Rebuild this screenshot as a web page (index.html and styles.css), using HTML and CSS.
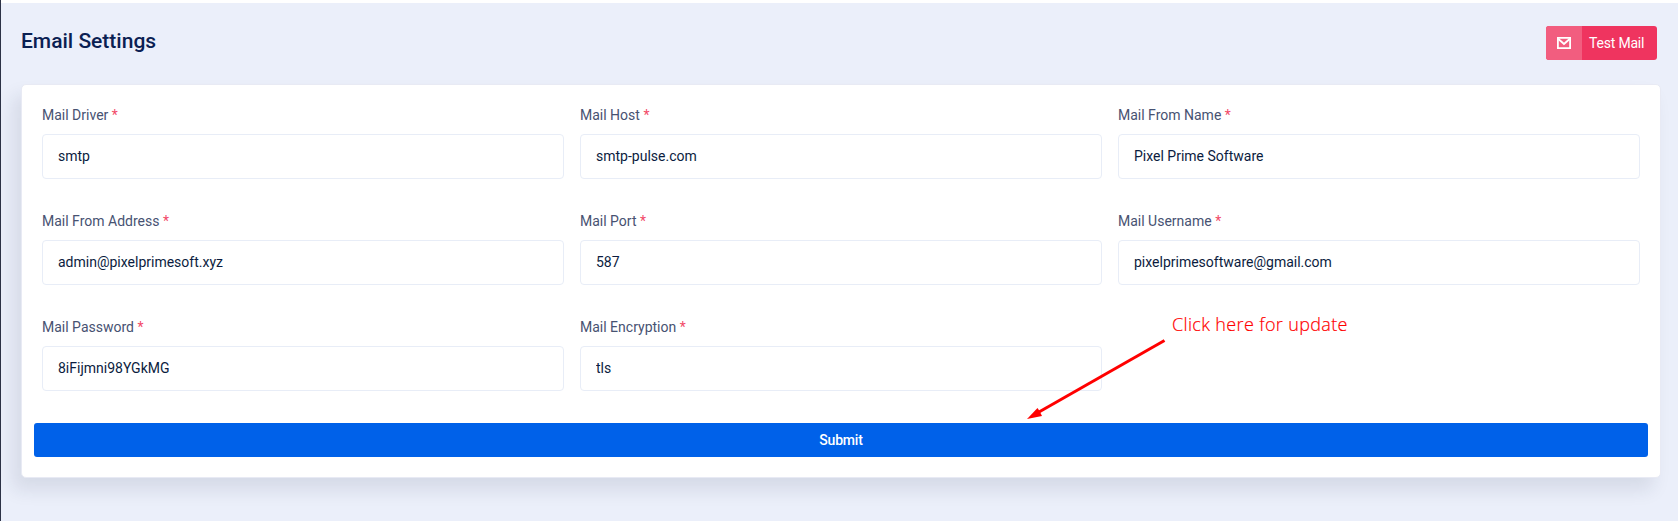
FILE: index.html
```html
<!DOCTYPE html>
<html lang="en">
<head>
<meta charset="utf-8">
<title>Email Settings</title>
<link rel="stylesheet" href="styles.css">
</head>
<body>
<main class="page">
  <header class="page-header">
    <h1 class="title">Email Settings</h1>
    <button class="test-mail" type="button">
      <span class="test-mail-icon">
        <svg width="14" height="12" viewBox="0 0 14 12" fill="none" stroke="#fff" stroke-width="1.8"><path d="M.9.9h12.2v10.2H.9z"/><path d="M1.4 2 7 7l5.6-5"/></svg>
      </span>
      <span class="test-mail-label">Test Mail</span>
    </button>
  </header>
  <form class="card">
    <div class="fields">
      <label class="field"><span class="label">Mail Driver <i class="req">*</i></span><input class="input" type="text" value="smtp"></label>
      <label class="field"><span class="label">Mail Host <i class="req">*</i></span><input class="input" type="text" value="smtp-pulse.com"></label>
      <label class="field"><span class="label">Mail From Name <i class="req">*</i></span><input class="input" type="text" value="Pixel Prime Software"></label>
      <label class="field"><span class="label">Mail From Address <i class="req">*</i></span><input class="input" type="text" value="admin@pixelprimesoft.xyz"></label>
      <label class="field"><span class="label">Mail Port <i class="req">*</i></span><input class="input" type="text" value="587"></label>
      <label class="field"><span class="label">Mail Username <i class="req">*</i></span><input class="input" type="text" value="pixelprimesoftware@gmail.com"></label>
      <label class="field"><span class="label">Mail Password <i class="req">*</i></span><input class="input" type="text" value="8iFijmni98YGkMG"></label>
      <label class="field"><span class="label">Mail Encryption <i class="req">*</i></span><input class="input" type="text" value="tls"></label>
    </div>
    <button class="submit" type="button">Submit</button>
  </form>
  <svg class="arrow" width="142" height="84" viewBox="0 0 142 84"><path d="M138.500 4.500 13 76" stroke="#f00" stroke-width="3"/><path d="M1 83 11.500 72 13.500 75 16 80z" fill="#f00"/></svg>
  <span class="note">Click here for update</span>
</main>
</body>
</html>
```
FILE: styles.css
```css
* { box-sizing: border-box; }
body {
  margin: 0;
  height: 521px;
  overflow: hidden;
  background: #ebeffa;
  font-family: Roboto, "Liberation Sans", sans-serif;
  font-size: 14px;
  color: #0b1c40;
  border-left: 1px solid #2c3246;
}
.page {
  position: relative;
  height: 521px;
  border-top: 3px solid #fff;
  padding: 23px 17px 0 20px;
}
.page-header {
  display: flex;
  justify-content: space-between;
  padding-right: 4px;
  height: 58px;
}
.title {
  margin: 0;
  font-size: 21px;
  line-height: 30px;
  font-weight: 500;
  color: #0a2052;
}
.test-mail {
  display: flex;
  width: 111px;
  height: 34px;
  padding: 0;
  border: 0;
  border-radius: 3px;
  overflow: hidden;
  background: #ef345f;
  color: #fff;
  font: 14px/34px Roboto, sans-serif;
  letter-spacing: -.2px;
}
.test-mail-icon {
  width: 36px;
  height: 34px;
  display: flex;
  align-items: center;
  justify-content: center;
  background: #f25d7f;
}
.test-mail-label { padding-left: 7px; }
.card {
  height: 394px;
  padding: 20px 12px 0;
  background: #fff;
  border: 1px solid #e8eaf4;
  border-radius: 5px;
  box-shadow: -8px 12px 18px 0 rgba(25, 42, 70, .1);
}
.fields {
  display: grid;
  grid-template-columns: repeat(3, 522px);
  gap: 32px 16px;
  padding: 0 8px;
}
.field { display: block; height: 74px; }
.label {
  display: block;
  height: 29px;
  line-height: 20px;
  color: #475272;
}
.req { font-style: normal; color: #f24a68; }
.input {
  display: block;
  width: 522px;
  height: 45px;
  padding: 0 15px 2px;
  border: 1px solid #e8edf7;
  border-radius: 4px;
  background: #fff;
  font: 14px/20px Roboto, sans-serif;
  color: #0b1c40;
}
.submit {
  display: block;
  width: 100%;
  height: 34px;
  margin-top: 32px;
  padding: 0;
  border: 0;
  border-radius: 3px;
  background: #0061e9;
  color: #fff;
  font: 500 14px/34px Roboto, sans-serif;
  letter-spacing: -.2px;
}
.arrow { position: absolute; left: 1025px; top: 333px; }
.note {
  position: absolute;
  left: 1171px;
  top: 308px;
  font: 300 18px/26px "Open Sans", "Noto Sans", sans-serif;
  letter-spacing: .35px;
  color: #f00;
  -webkit-text-stroke: .2px #f00;
  white-space: nowrap;
}
```
